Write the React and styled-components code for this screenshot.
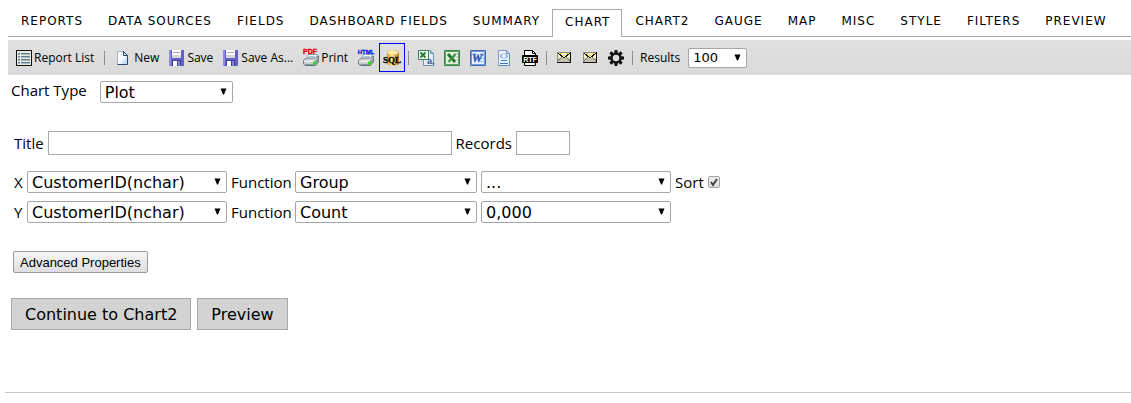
import React from "react";
import styled, { createGlobalStyle, css } from "styled-components";

const ui = '"Open Sans", "Noto Sans", sans-serif';
const verdana = 'Verdana, "DejaVu Sans", sans-serif';

const GlobalStyle = createGlobalStyle`
  *, *::before, *::after { box-sizing: border-box; }
  body { margin: 0; background: #fff; color: #000; font: 15px/22px ${ui}; }
  button, input, select { margin: 0; color: inherit; }
`;

const Page = styled.div`
  padding: 9px 0 10px 5px;
`;

const Tabs = styled.nav`
  display: flex;
  margin-left: 3px;
  box-shadow: inset 0 -1px #aaa;
`;

const Tab = styled.a`
  height: 28px;
  padding: 0 11px 0 12px;
  border: 1px solid transparent;
  border-bottom: 0;
  color: #000;
  font: 12px/22px ${verdana};
  letter-spacing: 1px;
  text-decoration: none;
  white-space: nowrap;
  ${(p) =>
    p.$active &&
    css`
      border-color: #aaa;
      background: #fff;
      line-height: 24px;
    `}
`;

const Toolbar = styled.div`
  display: flex;
  align-items: center;
  height: 35px;
  margin: 3px 0 0 3px;
  padding-left: 3px;
  background: linear-gradient(#e0e0e0, #dadada);
  font-size: 12px;
`;

const Tool = styled.button`
  display: flex;
  align-items: center;
  gap: 2px;
  height: 29px;
  padding: 0 4px;
  border: 1px solid ${(p) => (p.$selected ? "#00f" : "transparent")};
  background: none;
  font: 12px/20px ${ui};
  white-space: nowrap;
`;

const Icon = styled.svg`
  display: block;
  flex: none;
  width: 16px;
  height: 16px;
  overflow: visible;
`;

const Separator = styled.span`
  width: 1px;
  height: 14px;
  margin: ${(p) => (p.$wide ? "0 6px 0 5px" : "0 4px 0 3px")};
  background: #8f8d88;
`;

const Results = styled.label`
  display: flex;
  align-items: center;
  gap: 8px;
  margin-left: 3px;
`;

const SelectBox = styled.span`
  display: grid;
  align-items: center;
  width: ${(p) => p.$width}px;
  > * { grid-area: 1 / 1; }
`;

const SelectInput = styled.select`
  appearance: none;
  width: 100%;
  height: ${(p) => (p.$small ? 20 : 22)}px;
  padding: ${(p) => (p.$small ? 0 : 1)}px 20px 0 4px;
  border: 1px solid #a6a6a6;
  border-radius: 2px;
  background: #fff;
  font: ${(p) => (p.$small ? "13px/18px" : "16px/19px")} ${verdana};
`;

const Arrow = styled.svg`
  justify-self: end;
  width: 7px;
  height: 8px;
  margin-right: 6px;
  pointer-events: none;
`;

const Form = styled.form`
  margin: 0;
  padding: 6px 0 0 6px;
`;

const Line = styled.div`
  display: flex;
  align-items: center;
  gap: ${(p) => p.$gap || 4}px;
`;

const TypeLine = styled(Line)`
  align-items: flex-start;
  line-height: 19px;
`;

const TitleLine = styled(Line)`
  margin: 28px 0 16px 3px;
`;

const TextInput = styled.input`
  width: ${(p) => p.$width}px;
  height: 24px;
  padding: 0 4px;
  border: 1px solid #a9a9a9;
  font: 16px ${verdana};
`;

const Axes = styled.div`
  display: grid;
  grid-template-columns: 9px 200px 60px 182px 190px auto;
  gap: 8px 4px;
  align-items: center;
  margin-left: 3px;
`;

const Check = styled.span`
  display: grid;
  > * { grid-area: 1 / 1; }
  > svg { pointer-events: none; }
`;

const CheckInput = styled.input`
  appearance: none;
  width: 12px;
  height: 12px;
  border: 1px solid #a3a3a3;
  border-radius: 2px;
  background: linear-gradient(#ededed, #dcdcdc);
  & + svg { visibility: hidden; }
  &:checked + svg { visibility: visible; }
`;

const Advanced = styled.button`
  display: block;
  height: 22px;
  margin: 28px 0 25px 2px;
  padding: 0 6px;
  border: 1px solid #9a9a9a;
  border-radius: 2px;
  background: linear-gradient(#f6f6f6, #dedede);
  font: 13px "Liberation Sans", Arial, sans-serif;
`;

const BigButton = styled.button`
  height: 32px;
  padding: 0 13px;
  border: 1px solid #a9a9a9;
  background: #d3d3d3;
  font: 16px ${verdana};
`;

const Rule = styled.hr`
  height: 1px;
  margin: 62px 0 0;
  border: 0;
  background: #c8c8c8;
`;

function Select({ width, small, options, ...rest }) {
  return (
    <SelectBox $width={width}>
      <SelectInput $small={small} {...rest}>
        {options.map((o) => <option key={o}>{o}</option>)}
      </SelectInput>
      <Arrow viewBox="0 0 7 8" aria-hidden="true"><path d="M0.5 0.5h6L4 6.500h-1z" /></Arrow>
    </SelectBox>
  );
}

const ListIcon = () => (
  <Icon viewBox="0 0 16 16" shapeRendering="crispEdges">
    <path fill="#111" d="M0 0h16v16H0z" />
    <path fill="#e9e9dc" d="M1 1h14v14H1z" />
    <path stroke="#5d7d93" d="M2 3.500h2M5 3.500h9M2 6.500h2M5 6.500h9M2 9.500h2M5 9.500h9M2 12.500h2M5 12.500h9" />
    <path stroke="#a9bbc6" d="M2 4.500h2M5 4.500h9M2 7.500h2M5 7.500h9M2 10.500h2M5 10.500h9M2 13.500h2M5 13.500h9" />
  </Icon>
);

const NewIcon = () => (
  <Icon viewBox="0 0 16 16">
    <defs>
      <linearGradient id="sheet" x2="1" y2="1">
        <stop stopColor="#fff" /><stop offset=".5" stopColor="#f7fbff" /><stop offset="1" stopColor="#a9cbe9" />
      </linearGradient>
    </defs>
    <path fill="url(#sheet)" stroke="#9db3ca" d="M1.500 1.500h6l4 4v9h-10z" />
    <path fill="none" stroke="#294967" d="M7.500 1.500l4 4v9h-10" />
    <path fill="#d4e4f2" stroke="#294967" d="M7.500 1.500v4h4z" />
  </Icon>
);

const SaveIcon = () => (
  <Icon viewBox="0 0 16 16">
    <path fill="#6462c4" d="M0 0h15v16H1l-1-1z" />
    <path fill="#8c8be0" d="M0 0h2v15H0z" />
    <path fill="#fbfbfd" d="M3 0h9v8H3z" />
    <path fill="#d5d5de" d="M3 5h9v3H3z" />
    <path fill="#a9a9bb" d="M4 2h7v1H4z" />
    <path fill="#4341a0" d="M3 10h9v6H3z" />
    <path fill="#fff" d="M4 11h4v5H4z" />
    <path fill="#8583cf" d="M9 11h2v5H9z" />
  </Icon>
);

const PrinterIcon = ({ label, color }) => (
  <Icon viewBox="0 0 16 16">
    <path fill="#fff" stroke="#86a9c0" d="M5.500 4.500h9l-2 5h-9z" />
    <path stroke="#9dc3dd" d="M6 6.500h6M5 8.500h6" />
    <path fill="#c6ccd0" stroke="#6d7c85" d="M.5 10.500l3-2.500h9l3-2v6l-3 3.500h-10l-2-1.500z" />
    <path fill="#f0f3f5" d="M1 10.500h11v1.500H1z" />
    <path fill="#8a979e" d="M12.500 10.500l2.500-2.500v4l-2.500 2.500z" />
    <path fill="#526068" d="M2 14.500h10v1H3z" />
    <path fill="#2edb20" d="M10 11.500h3v3h-3z" />
    <text x={label === "PDF" ? 7 : 8} y="4" textAnchor="middle" fill={color} stroke={color} strokeWidth=".3" fontFamily="Liberation Sans, sans-serif" fontWeight="700" fontSize={label === "PDF" ? 7 : 6}>{label}</text>
  </Icon>
);

const SqlIcon = () => (
  <Icon viewBox="0 0 16 16">
    <defs>
      <linearGradient id="drum">
        <stop stopColor="#d8941a" /><stop offset=".4" stopColor="#ffe58a" /><stop offset="1" stopColor="#b97a18" />
      </linearGradient>
    </defs>
    <path fill="url(#drum)" d="M3 2.500C3-.5 15-.5 15 2.500v11c0 3-12 3-12 0z" />
    <ellipse cx="9" cy="2.500" rx="5.500" ry="1.800" fill="#fff0ad" />
    <text x="8" y="13" textAnchor="middle" fontFamily="Liberation Serif, serif" fontWeight="700" fontSize="9" stroke="#000" strokeWidth=".3">SQL</text>
  </Icon>
);

const CsvIcon = () => (
  <Icon viewBox="0 0 16 16">
    <path fill="#e3edfa" stroke="#7090ba" d="M5.500.5h7l3 3v12h-10z" />
    <path fill="#b6cce8" stroke="#7090ba" d="M12.500.5v3h3z" />
    <path fill="#f1faf0" stroke="#39824a" d="M.5.5h10v9H.5z" />
    <path stroke="#2e7d3c" strokeWidth="2" d="M2.500 2.500l5 5M7.500 2.500l-5 5" />
    <text x="9" y="14" fill="#2d568e" fontFamily="Liberation Sans, sans-serif" fontWeight="700" fontSize="9">a,</text>
  </Icon>
);

const ExcelIcon = () => (
  <Icon viewBox="0 0 16 16">
    <path fill="#e4f1df" stroke="#3b8345" d="M.5.5h15v15H.5z" />
    <path fill="none" stroke="#5ea263" d="M1.500 1.500h13v13h-13z" />
    <path fill="#c5dfc0" d="M10 3h4v10h-4z" />
    <path stroke="#fff" d="M10 5.500h4M10 8.500h4M10 11.500h4" />
    <path stroke="#267833" strokeWidth="3" d="M4 4l7 8" />
    <path stroke="#3e9348" strokeWidth="2" d="M11.500 4l-7 8" />
  </Icon>
);

const WordIcon = () => (
  <Icon viewBox="0 0 16 16">
    <path fill="#e7effc" stroke="#426bb4" d="M.5.5h15v15H.5z" />
    <path fill="none" stroke="#6f97da" d="M1.500 1.500h13v13h-13z" />
    <path stroke="#a6bfe8" d="M10 5.500h4M10 8.500h4M10 11.500h4" />
    <text x="7" y="12" textAnchor="middle" fill="#2a5cb5" stroke="#2a5cb5" strokeWidth=".4" fontFamily="Liberation Serif, serif" fontStyle="italic" fontWeight="700" fontSize="12">W</text>
  </Icon>
);

const XmlIcon = () => (
  <Icon viewBox="0 0 16 16">
    <path fill="#eaf2fd" stroke="#7d9fca" d="M2.500.5h8l3 3v12h-11z" />
    <path fill="#bed4ee" stroke="#7d9fca" d="M10.500.5v3h3z" />
    <path fill="none" stroke="#3f7ac0" d="M7 3.500L4.500 6l2.500 2.500M9 3.500L11.500 6 9 8.500M5 10.500h6M4 13.500h8" />
    <path fill="none" stroke="#5b8dc9" d="M13.500 4v11.500h-11" />
  </Icon>
);

const RtfIcon = () => (
  <Icon viewBox="0 0 16 16">
    <path fill="#fff" stroke="#000" d="M2.500.5h8l3 3v12h-11z" />
    <path fill="none" stroke="#000" d="M10.500.5v3h3" />
    <rect y="5" width="16" height="8" rx="1" />
    <text x="8" y="11.500" textAnchor="middle" fill="#fff" fontFamily="Liberation Sans, sans-serif" fontWeight="700" fontSize="7">RTF</text>
  </Icon>
);

const MailIcon = () => (
  <Icon viewBox="0 0 16 16" shapeRendering="crispEdges">
    <path fill="#f6f2c8" d="M1 2h14v11H1z" />
    <path fill="#c2c0ac" d="M2 8h12v4H2z" />
    <path fill="none" stroke="#8b8b80" d="M1.500 12V2.500h13" />
    <path fill="none" stroke="#111" d="M1 12.500h13.500V2M2 3l6 5 6-5" />
    <path fill="none" stroke="#77756a" d="M2 11l4-4M14 11l-4-4" />
    <path fill="#eed63b" d="M4 3h2v1H4zM7 5h2v1H7zM10 3h2v1h-2z" />
  </Icon>
);

const GearIcon = () => (
  <Icon viewBox="0 0 16 16">
    <circle cx="8" cy="8" r="4.500" fill="none" stroke="#111" strokeWidth="2.400" />
    {[0, 45, 90, 135, 180, 225, 270, 315].map((a) => (
      <path key={a} fill="#111" d="M6.600 0h2.800l.3 3H6.300z" transform={`rotate(${a} 8 8)`} />
    ))}
  </Icon>
);

const tabs = [
  "REPORTS", "DATA SOURCES", "FIELDS", "DASHBOARD FIELDS", "SUMMARY", "CHART", "CHART2",
  "GAUGE", "MAP", "MISC", "STYLE", "FILTERS", "PREVIEW",
];

export default function App() {
  return (
    <Page>
      <GlobalStyle />
      <Tabs>
        {tabs.map((t) => (
          <Tab key={t} href="#" $active={t === "CHART"}>{t}</Tab>
        ))}
      </Tabs>
      <Toolbar>
        <Tool><ListIcon />Report List</Tool>
        <Separator $wide />
        <Tool><NewIcon />New</Tool>
        <Tool><SaveIcon />Save</Tool>
        <Tool><SaveIcon />Save As...</Tool>
        <Tool><PrinterIcon label="PDF" color="#d40000" />Print</Tool>
        <Tool aria-label="Print HTML"><PrinterIcon label="HTML" color="#0026e6" /></Tool>
        <Tool aria-label="SQL" $selected><SqlIcon /></Tool>
        <Separator />
        <Tool aria-label="Export CSV"><CsvIcon /></Tool>
        <Tool aria-label="Export Excel"><ExcelIcon /></Tool>
        <Tool aria-label="Export Word"><WordIcon /></Tool>
        <Tool aria-label="Export XML"><XmlIcon /></Tool>
        <Tool aria-label="Export RTF"><RtfIcon /></Tool>
        <Separator />
        <Tool aria-label="Email link"><MailIcon /></Tool>
        <Tool aria-label="Email report"><MailIcon /></Tool>
        <Tool aria-label="Settings"><GearIcon /></Tool>
        <Separator />
        <Results>
          Results
          <Select small width={59} options={["100", "1000"]} />
        </Results>
      </Toolbar>
      <Form onSubmit={(e) => e.preventDefault()}>
        <TypeLine $gap={13}>
          <label htmlFor="type">Chart Type</label>
          <Select id="type" width={133} options={["Plot", "Bar", "Pie"]} />
        </TypeLine>
        <TitleLine>
          <label htmlFor="title">Title</label>
          <TextInput id="title" type="text" $width={404} />
          <label htmlFor="records">Records</label>
          <TextInput id="records" type="text" $width={54} />
        </TitleLine>
        <Axes>
          <label htmlFor="x">X</label>
          <Select id="x" width={200} options={["CustomerID(nchar)"]} />
          <label htmlFor="xf">Function</label>
          <Select id="xf" width={182} options={["Group", "Count"]} />
          <Select aria-label="X format" width={190} options={["..."]} />
          <Line>
            <label htmlFor="sort">Sort</label>
            <Check>
              <CheckInput id="sort" type="checkbox" defaultChecked />
              <svg width="12" height="12" viewBox="0 0 12 12" aria-hidden="true">
                <path d="M3 6l2 3 4-6" fill="none" stroke="#444" strokeWidth="2" />
              </svg>
            </Check>
          </Line>
          <label htmlFor="y">Y</label>
          <Select id="y" width={200} options={["CustomerID(nchar)"]} />
          <label htmlFor="yf">Function</label>
          <Select id="yf" width={182} options={["Count", "Group"]} />
          <Select aria-label="Y format" width={190} options={["0,000"]} />
        </Axes>
        <Advanced type="button">Advanced Properties</Advanced>
        <Line $gap={6}>
          <BigButton type="button">Continue to Chart2</BigButton>
          <BigButton type="button">Preview</BigButton>
        </Line>
      </Form>
      <Rule />
    </Page>
  );
}
